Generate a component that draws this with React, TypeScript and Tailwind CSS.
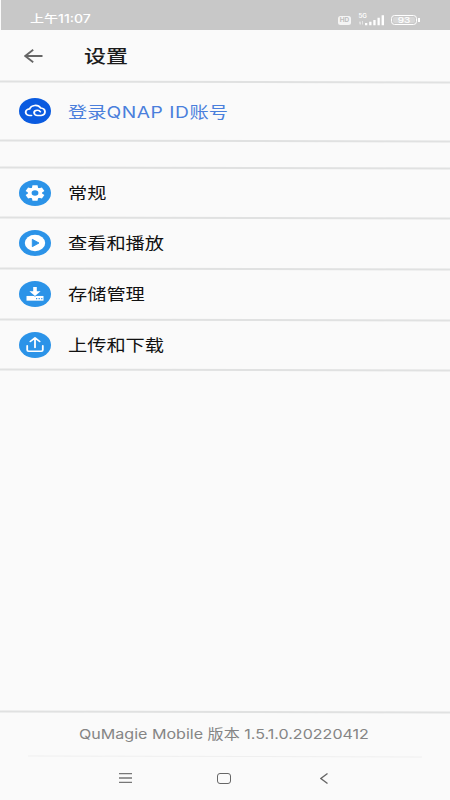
import React from 'react'

function Line({ className = '' }: { className?: string }) {
  return <div className={`h-[1.5px] w-full shrink-0 rotate-[0.15deg] bg-[#e0e1e1] ${className}`} />
}

function Badge({ color, children }: { color: string; children: React.ReactNode }) {
  return (
    <svg viewBox="0 0 32 32" preserveAspectRatio="none" className="h-[26px] w-8 shrink-0" fill="none">
      <circle cx="16" cy="16" r="16" fill={color} />
      {children}
    </svg>
  )
}

function CloudIcon() {
  return (
    <Badge color="#0a5be0">
      <g stroke="#fff" strokeWidth="1.9" strokeLinecap="round">
        <path d="M12.5 21.6H11a4.100 4.100 0 0 1-.4-8.200A6 6 0 0 1 21.600 12.200a4.750 4.750 0 0 1 .5 9.400H18.500a3.400 3.400 0 0 1-3.400-3.400c0-1.900 1.500-3.100 3.300-3.100 1.400 0 2.400.7 2.900 1.800" />
      </g>
    </Badge>
  )
}

function GearIcon() {
  return (
    <Badge color="#2b93e8">
      <g fill="#fff">
        <circle cx="16" cy="16" r="7.2" />
        {[0, 60, 120].map((angle) => (
          <path key={angle} d="M13.5 6.6h5l.7 4v10.8l-.7 4h-5l-.7-4V10.600z" transform={`rotate(${angle} 16 16)`} />
        ))}
      </g>
      <circle cx="16" cy="16" r="3.4" fill="#2b93e8" />
    </Badge>
  )
}

function PlayIcon() {
  return (
    <Badge color="#2b93e8">
      <circle cx="16" cy="16" r="10.2" fill="#fff" />
      <path d="M13.3 11.5v9l6.700-4.500z" fill="#2b93e8" stroke="#2b93e8" strokeWidth="1" strokeLinejoin="round" />
    </Badge>
  )
}

function StorageIcon() {
  return (
    <Badge color="#2b93e8">
      <path d="M7.5 18.400h17v5.800h-17z" fill="#fff" />
      <path d="M14.200 7.500h3.600v5h3.800L16 18.400l-5.600-5.900h3.800z" fill="#fff" stroke="#2b93e8" strokeWidth="1.200" paintOrder="stroke" />
      <path d="M17 21.600h1.200M19.600 21.600h1.200M22.200 21.600h1.200" stroke="#2b93e8" strokeWidth="1.500" />
    </Badge>
  )
}

function UploadIcon() {
  return (
    <Badge color="#2b93e8">
      <g stroke="#fff" strokeWidth="1.8" strokeLinecap="round" strokeLinejoin="round">
        <path d="M16 19V7.500M11.300 11.600L16 7.200l4.700 4.400" />
        <path d="M8.200 17v5.200a1.500 1.500 0 0 0 1.500 1.500h12.600a1.500 1.500 0 0 0 1.500-1.500V17" />
      </g>
    </Badge>
  )
}

function StatusBar() {
  return (
    <div className="ml-px flex h-[30px] shrink-0 items-center bg-[#c8c8c8] pt-[10px] pl-[29px] text-white">
      <div className="flex w-[308px]">
        <span className="origin-left scale-x-[1.220] text-[11.500px] leading-none font-medium whitespace-nowrap">上午11:07</span>
      </div>
      <div className="flex h-[9px] w-[13px] items-center justify-center rounded-[2.500px] bg-[#f4f4f4] text-[6.500px] leading-none font-bold text-[#bdbdbd]">
        HD
      </div>
      <svg viewBox="0 0 30 14" className="ml-[7px] h-[14px] w-[30px]" fill="#fff">
        <text x="0.500" y="5" fontSize="5.500" fontWeight="600" textLength="8.500" lengthAdjust="spacingAndGlyphs">5G</text>
        <path d="M1 9.500l1-1.500 1 1.500v2H1.600zM4 8h1v3.500H4z" opacity=".5" />
        <path d="M7 10h2.300v2.300H7zM11.200 8.700h2.300v3.600h-2.300zM15.300 7h2.300v5.300h-2.300zM19.500 4.700h2.300v7.600h-2.300zM23.600 2.300H26v10h-2.400z" />
      </svg>
      <div className="ml-[3px] flex h-[10px] w-[26px] items-center justify-center rounded-[3.500px] border border-white p-px">
        <div className="flex h-full w-full items-center justify-center rounded-[2px] bg-[#d6d6d6]">
          <span className="scale-x-[1.250] text-[8px] leading-none font-medium">93</span>
        </div>
      </div>
      <div className="ml-px h-[4px] w-[1.500px] bg-white" />
    </div>
  )
}

const rows = [
  { label: '常规', icon: <GearIcon /> },
  { label: '查看和播放', icon: <PlayIcon /> },
  { label: '存储管理', icon: <StorageIcon /> },
  { label: '上传和下载', icon: <UploadIcon /> },
]

function App() {
  return (
    <div className="flex h-[800px] w-[450px] flex-col overflow-hidden bg-[#fafafa] font-[Inter,'Noto_Sans_CJK_SC',sans-serif]">
      <StatusBar />

      <div className="flex h-[51px] shrink-0 items-center pl-6">
        <svg viewBox="0 0 19 14" className="h-[14px] w-[19px]" fill="none" stroke="#666" strokeWidth="1.800">
          <path d="M18.500 7H1.200M9.200 0.800L1.200 7l8 6.200" />
        </svg>
        <h1 className="mt-[2px] ml-[41px] origin-left scale-x-[1.220] text-[18px] leading-none font-medium text-[#1c1c1c]">设置</h1>
      </div>
      <Line />

      <div className="flex h-[57.500px] shrink-0 items-center pl-[19px]">
        <CloudIcon />
        <span className="mt-px ml-[17px] origin-left scale-x-[1.200] text-[16px] leading-none whitespace-nowrap text-[#4a7fdc]">
          登录<span className="tracking-[0.480px]">QNAP ID</span>账号
        </span>
      </div>
      <Line />
      <div className="h-[25px] shrink-0" />
      <Line />

      {rows.map((row) => (
        <React.Fragment key={row.label}>
          <div className="flex h-[49.200px] shrink-0 items-center pl-[19px]">
            {row.icon}
            <span className="ml-[17px] origin-left scale-x-[1.200] text-[16px] leading-none whitespace-nowrap text-[#111]">{row.label}</span>
          </div>
          <Line />
        </React.Fragment>
      ))}

      <div className="flex-1" />
      <Line />
      <div className="flex h-[43px] shrink-0 items-center pt-[2px] pl-[79px]">
        <span className="origin-left scale-x-[1.190] text-[13.500px] leading-none whitespace-nowrap text-[#858585]">QuMagie Mobile 版本 1.5.1.0.20220412</span>
      </div>
      <div className="mx-auto h-px w-[394px] shrink-0 rotate-[0.15deg] bg-[#efefef]" />
      <div className="flex h-[43.500px] shrink-0 items-center pl-[119px]">
        <svg viewBox="0 0 13 10" className="h-[10px] w-[13px]" stroke="#777" strokeWidth="1.300">
          <path d="M0 .7h13M0 5h13M0 9.300h13" />
        </svg>
        <div className="ml-[85px] h-[11px] w-[14px] rounded-[3px] border-[1.500px] border-[#666]" />
        <svg viewBox="0 0 8 11" className="ml-[89px] h-[11px] w-[8px]" fill="none" stroke="#666" strokeWidth="1.300">
          <path d="M7.500.5L.9 5.500l6.600 5" />
        </svg>
      </div>
    </div>
  )
}

export default App
